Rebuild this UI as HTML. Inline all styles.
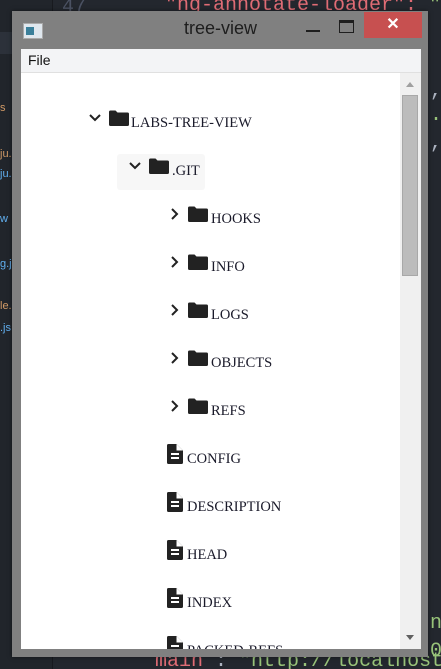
<!DOCTYPE html><html style="overflow:hidden"><head><style>
body{margin:0;width:441px;height:669px;background:#23272e;position:relative;overflow:hidden;font-family:"Liberation Sans",sans-serif}
.abs{position:absolute}
.win{left:12px;top:11px;width:416px;height:646px;background:#808080;box-shadow:0 0 4px rgba(0,0,0,.5)}
.menu{left:21px;top:49px;width:400px;height:23px;background:#f3f4f6;border-bottom:1px solid #e0e0e0;font-size:14px;color:#111}
.content{left:21px;top:73px;width:379px;height:576px;background:#fff;overflow:hidden}
.content>*{margin-top:2px}
.sb{left:400px;top:73px;width:21px;height:576px;background:#f0f0f0}
.item{position:absolute;font-family:"Liberation Serif",serif;font-size:14.5px;color:#1a1a2a;white-space:nowrap}
.clip{position:absolute;overflow:hidden;white-space:nowrap}
</style></head><body>
<div class="abs" style="left:0;top:0;width:52px;height:669px;background:#21252b"></div>
<div class="abs" style="left:52px;top:0;width:1px;height:669px;background:#181a1f"></div>
<div class="abs" style="left:62px;top:-4px;font:20px 'Liberation Mono',monospace;color:#4b5263">47</div>
<div class="clip" style="left:165px;top:-6px;width:276px;font:20px 'Liberation Mono',monospace;color:#e06c75">"ng-annotate-loader": <span style="color:#98c379">"0.0.1</span></div>
<div class="abs" style="left:0;top:32px;width:12px;height:22px;background:#2c313a"></div>
<div class="abs" style="left:0;top:102px;font:11px sans-serif;color:#d19a66">s</div>
<div class="clip" style="left:0;top:148px;width:12px;font:11px sans-serif;color:#d19a66">ju.r</div>
<div class="clip" style="left:0;top:168px;width:12px;font:11px sans-serif;color:#61afef">ju.s</div>
<div class="abs" style="left:0;top:213px;font:11px sans-serif;color:#61afef">w</div>
<div class="clip" style="left:0;top:258px;width:12px;font:11px sans-serif;color:#61afef">g.js</div>
<div class="clip" style="left:0;top:300px;width:12px;font:11px sans-serif;color:#d19a66">le.</div>
<div class="clip" style="left:0;top:322px;width:12px;font:11px sans-serif;color:#61afef">.js</div>
<div class="abs" style="left:430px;top:80px;font:20px 'Liberation Mono',monospace;color:#abb2bf">,</div>
<div class="clip" style="left:430px;top:104px;width:11px;font:20px 'Liberation Mono',monospace;color:#98c379">.4</div>
<div class="abs" style="left:430px;top:132px;font:20px 'Liberation Mono',monospace;color:#abb2bf">,</div>
<div class="clip" style="left:430px;top:612px;width:11px;font:20px 'Liberation Mono',monospace;color:#98c379">nc</div>
<div class="clip" style="left:430px;top:640px;width:11px;font:20px 'Liberation Mono',monospace;color:#98c379">0e</div>
<div class="clip" style="left:155px;top:650px;width:286px;font:20px 'Liberation Mono',monospace;color:#e06c75">main <span style="color:#abb2bf">:</span> <span style="color:#98c379">"http://localhost:300</span></div>
<div class="abs win"></div>
<div class="abs" style="left:23px;top:23px;width:18px;height:14px;background:#dfe7ee;border:1px solid #aaa"><div style="position:absolute;left:2px;top:3px;width:8px;height:8px;background:#3a7f9a"></div></div>
<div class="abs" style="left:0;top:18px;width:441px;text-align:center;font-size:18px;color:#1e1e1e">tree-view</div>
<div class="abs" style="left:306px;top:30px;width:14px;height:2px;background:#1e1e1e"></div>
<div class="abs" style="left:339px;top:20px;width:13px;height:9px;border:1px solid #1e1e1e;border-top-width:3px"></div>
<div class="abs" style="left:364px;top:12px;width:58px;height:26px;background:#c75050;color:#fff;text-align:center;font:bold 16px/26px sans-serif">✕</div>
<div class="abs menu"><span style="position:absolute;left:7px;top:3px">File</span></div>
<div class="abs content">
<svg width="0" height="0" style="position:absolute"><defs>
<symbol id="fo" viewBox="0 0 20 16"><path d="M0 2a1.5 1.5 0 0 1 1.5-1.5h5l2 2h10A1.5 1.5 0 0 1 20 4v10.5A1.5 1.5 0 0 1 18.5 16h-17A1.5 1.5 0 0 1 0 14.5z" fill="#222"/></symbol>
<symbol id="fi" viewBox="0 0 16 20"><path d="M1.5 0h8l6.5 6.5v12a1.5 1.5 0 0 1-1.5 1.5h-13A1.5 1.5 0 0 1 0 18.5v-17A1.5 1.5 0 0 1 1.5 0z" fill="#222"/><path d="M9.5 0v6.5h6.5" fill="#fff"/><rect x="4" y="9" width="8" height="2" fill="#fff"/><rect x="4" y="13" width="8" height="2" fill="#fff"/></symbol>
<symbol id="dn" viewBox="0 0 12 8"><path d="M1 1l5 5 5-5" stroke="#222" stroke-width="2" fill="none"/></symbol>
<symbol id="rt" viewBox="0 0 8 12"><path d="M1 1l5 5-5 5" stroke="#222" stroke-width="2" fill="none"/></symbol>
</defs></svg>
<div class="abs" style="left:96px;top:79px;width:88px;height:36px;background:#f7f7f7;border-radius:3px"></div>
<svg class="abs" style="left:68px;top:39px" width="12" height="8"><use href="#dn"/></svg>
<svg class="abs" style="left:88px;top:35px" width="20" height="16"><use href="#fo"/></svg>
<div class="item" style="left:110px;top:40px">LABS-TREE-VIEW</div>
<svg class="abs" style="left:108px;top:87px" width="12" height="8"><use href="#dn"/></svg>
<svg class="abs" style="left:128px;top:83px" width="20" height="16"><use href="#fo"/></svg>
<div class="item" style="left:151px;top:88px">.GIT</div>
<svg class="abs" style="left:150px;top:133px" width="8" height="12"><use href="#rt"/></svg><svg class="abs" style="left:167px;top:131px" width="20" height="16"><use href="#fo"/></svg><div class="item" style="left:190px;top:136px">HOOKS</div>
<svg class="abs" style="left:150px;top:181px" width="8" height="12"><use href="#rt"/></svg><svg class="abs" style="left:167px;top:179px" width="20" height="16"><use href="#fo"/></svg><div class="item" style="left:190px;top:184px">INFO</div>
<svg class="abs" style="left:150px;top:229px" width="8" height="12"><use href="#rt"/></svg><svg class="abs" style="left:167px;top:227px" width="20" height="16"><use href="#fo"/></svg><div class="item" style="left:190px;top:232px">LOGS</div>
<svg class="abs" style="left:150px;top:277px" width="8" height="12"><use href="#rt"/></svg><svg class="abs" style="left:167px;top:275px" width="20" height="16"><use href="#fo"/></svg><div class="item" style="left:190px;top:280px">OBJECTS</div>
<svg class="abs" style="left:150px;top:325px" width="8" height="12"><use href="#rt"/></svg><svg class="abs" style="left:167px;top:323px" width="20" height="16"><use href="#fo"/></svg><div class="item" style="left:190px;top:328px">REFS</div>
<svg class="abs" style="left:146px;top:369px" width="16" height="20"><use href="#fi"/></svg><div class="item" style="left:166px;top:376px">CONFIG</div>
<svg class="abs" style="left:146px;top:417px" width="16" height="20"><use href="#fi"/></svg><div class="item" style="left:166px;top:424px">DESCRIPTION</div>
<svg class="abs" style="left:146px;top:465px" width="16" height="20"><use href="#fi"/></svg><div class="item" style="left:166px;top:472px">HEAD</div>
<svg class="abs" style="left:146px;top:513px" width="16" height="20"><use href="#fi"/></svg><div class="item" style="left:166px;top:520px">INDEX</div>
<svg class="abs" style="left:146px;top:561px" width="16" height="20"><use href="#fi"/></svg><div class="item" style="left:166px;top:568px">PACKED-REFS</div>
</div>
<div class="abs sb"></div>
<div class="abs" style="left:406px;top:82px;width:0;height:0;border:4px solid transparent;border-bottom:5px solid #a0a0a0;border-top:0"></div>
<div class="abs" style="left:402px;top:95px;width:16px;height:181px;background:#bcbcbc;border:1px solid #a8a8a8;box-sizing:border-box"></div>
<div class="abs" style="left:406px;top:635px;width:0;height:0;border:4px solid transparent;border-top:5px solid #606060;border-bottom:0"></div>
</body></html>
